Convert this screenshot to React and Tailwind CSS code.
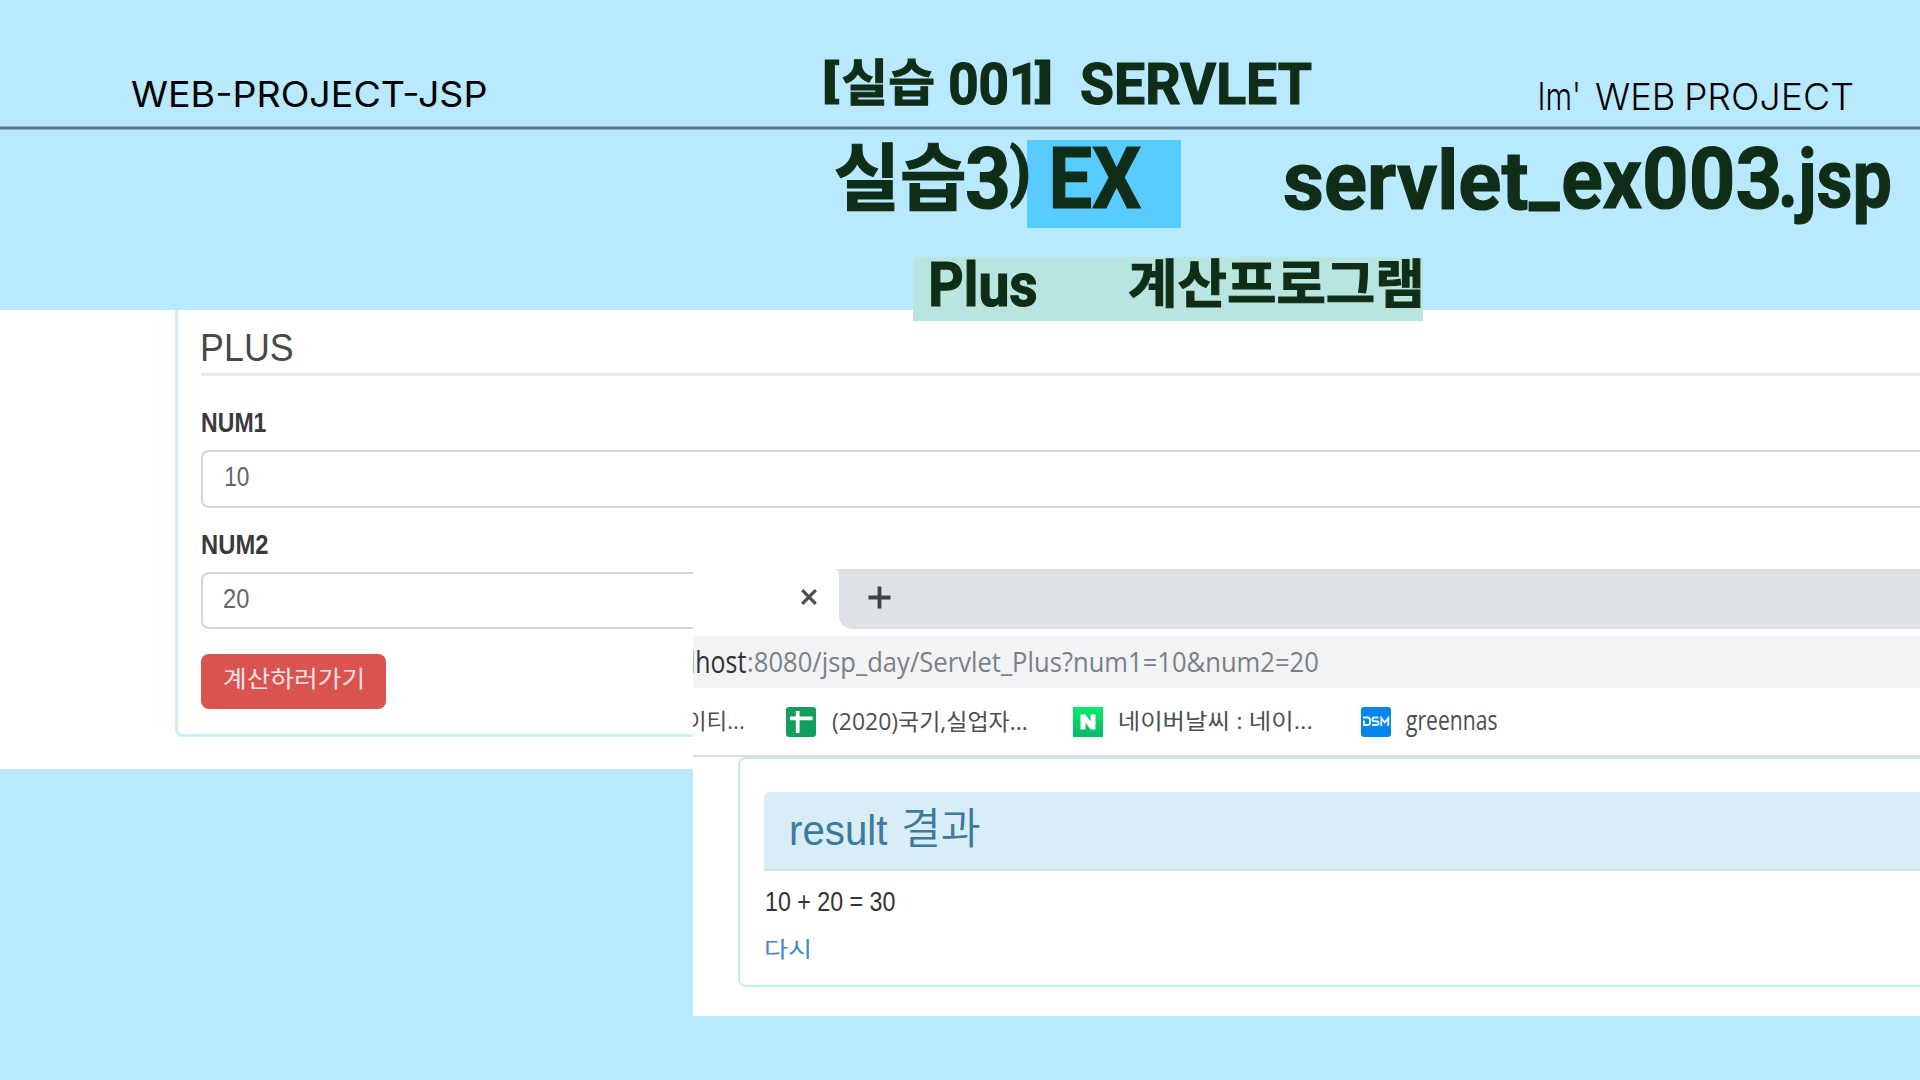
import React, { useLayoutEffect, useRef, useState } from "react";

const TITLE = "font-['Roboto','Noto_Sans_CJK_KR',sans-serif] [-webkit-text-stroke:1.2px_#0f2d17]";
const ARIAL = "font-['Liberation_Sans','Noto_Sans_CJK_KR',sans-serif]";
const INTER = "font-['Inter',sans-serif]";
const SEGOE = "font-['Open_Sans','Noto_Sans_CJK_KR',sans-serif]";

/* Text stretched so that its inked area fills the box given by the width and height classes. */
function Ink({ children, className = "" }) {
  const box = useRef(null);
  const [style, setStyle] = useState({});
  useLayoutEffect(() => {
    const el = box.current;
    const cs = getComputedStyle(el);
    const ctx = document.createElement("canvas").getContext("2d");
    ctx.font = `${cs.fontWeight} ${cs.fontSize} ${cs.fontFamily}`;
    const m = ctx.measureText(children);
    const size = parseFloat(cs.fontSize);
    const baseline = (size + m.fontBoundingBoxAscent - m.fontBoundingBoxDescent) / 2;
    const sx = el.clientWidth / (m.actualBoundingBoxLeft + m.actualBoundingBoxRight);
    const sy = el.clientHeight / (m.actualBoundingBoxAscent + m.actualBoundingBoxDescent);
    setStyle({
      transform: `scale(${sx}, ${sy}) translate(${m.actualBoundingBoxLeft}px, ${m.actualBoundingBoxAscent - baseline}px)`,
    });
  }, [children]);
  return (
    <span ref={box} className={`block shrink-0 ${className}`}>
      <span className="block w-max origin-top-left whitespace-pre leading-none" style={style}>
        {children}
      </span>
    </span>
  );
}

function Header() {
  return (
    <header className="flex h-[126px] items-start">
      <Ink className={`ml-[131px] mt-[81px] h-[26px] w-[355px] text-[35px] text-black ${INTER}`}>WEB-PROJECT-JSP</Ink>
      <div className={`ml-[339px] flex items-start text-[58px] font-bold text-[#0f2d17] ${TITLE}`}>
        <Ink className="mt-[59px] h-[45px] w-[14px]">[</Ink>
        <Ink className="ml-[4px] mt-[59px] h-[47px] w-[90px]">실습</Ink>
        <Ink className="ml-[17px] mt-[62px] h-[43px] w-[80px]">001</Ink>
        <Ink className="ml-[5px] mt-[59px] h-[45px] w-[15px]">]</Ink>
        <Ink className="ml-[31px] mt-[62px] h-[43px] w-[230px]">SERVLET</Ink>
      </div>
      <div className={`ml-[229px] mt-[82px] flex items-start text-[36px] font-light text-black ${INTER}`}>
        <Ink className="h-[28px] w-[38px]">Im'</Ink>
        <Ink className="ml-[18px] mt-px h-[27px] w-[78px]">WEB</Ink>
        <Ink className="ml-[13px] mt-px h-[27px] w-[165px]">PROJECT</Ink>
      </div>
    </header>
  );
}

function Titles() {
  return (
    <section className={`relative z-10 h-[180px] font-bold text-[#0f2d17] ${TITLE}`}>
      <div className="flex h-[127px] items-start pl-[836px] text-[84px]">
        <Ink className="relative z-10 mt-[13px] h-[68px] w-[128px]">실습</Ink>
        <Ink className="relative z-10 ml-[3px] mt-[17px] h-[63px] w-[41px]">3</Ink>
        <Ink className="relative z-10 ml-[2px] mt-[13px] h-[66px] w-[18px]">)</Ink>
        <div className="-ml-px mt-[10px] flex h-[88px] w-[154px] bg-[#58cbff] pl-[26px] pt-[8px]">
          <Ink className="h-[61px] w-[88px]">EX</Ink>
        </div>
        <Ink className="ml-[104px] mt-[18px] h-[62px] w-[242px]">servlet</Ink>
        <Ink className="ml-[2px] mt-[72px] h-[9px] w-[31px]">_</Ink>
        <Ink className="ml-[3px] mt-[33px] h-[47px] w-[79px]">ex</Ink>
        <Ink className="ml-[3px] mt-[17px] h-[63px] w-[134px]">003</Ink>
        <Ink className="ml-[3px] mt-[18px] h-[77px] w-[108px]">.jsp</Ink>
      </div>
      <div className="ml-[913px] flex h-[64px] w-[510px] items-start bg-[#b8e5df] pl-[18px] text-[60px]">
        <Ink className="mt-[5px] h-[46px] w-[105px]">Plus</Ink>
        <Ink className="ml-[93px] mt-[2px] h-[50px] w-[291px]">계산프로그램</Ink>
      </div>
    </section>
  );
}

function Form() {
  return (
    <section className={`h-[459px] bg-white pl-[175px] ${ARIAL}`}>
      <div className="h-[427px] overflow-hidden rounded-bl-lg border-b-[3px] border-l-[3px] border-[#cdeef3] pl-[23px] text-[#3a3a3a]">
        <div className="h-[66px] border-b-[3px] border-[#e9e9e9] pl-[2px] pt-[24px]">
          <Ink className="h-[27px] w-[89px] text-[37px] text-[#484848]">PLUS</Ink>
        </div>
        <Ink className="ml-px mt-[37px] h-[19px] w-[64px] text-[26px] font-bold">NUM1</Ink>
        <div className="mt-[18px] h-[58px] rounded-l-lg border-[2.5px] border-r-0 border-[#d4d4d4] pl-[22px] pt-[15px]">
          <Ink className="h-[19px] w-[24px] text-[26px] text-[#666]">10</Ink>
        </div>
        <Ink className="ml-px mt-[27px] h-[19px] w-[66px] text-[26px] font-bold">NUM2</Ink>
        <div className="mt-[18px] h-[57px] rounded-l-lg border-[2.5px] border-r-0 border-[#d4d4d4] pl-[21px] pt-[15px]">
          <Ink className="h-[19px] w-[25px] text-[26px] text-[#666]">20</Ink>
        </div>
        <button className="mt-[25px] flex h-[55px] w-[185px] rounded-lg bg-[#d9534f] pl-[23px] pt-[13px]">
          <Ink className="h-[23px] w-[138px] text-[25px] text-[#fbe3e6]">계산하러가기</Ink>
        </button>
      </div>
    </section>
  );
}

function TabStrip() {
  return (
    <div className="flex h-[60px]">
      <div className="w-[142px] pl-[108px] pt-[20px]">
        <svg className="size-4" viewBox="0 0 16 16" stroke="#4a4d50" strokeWidth="3.2" fill="none">
          <path d="M1.2 1.2 14.8 14.8M14.8 1.2 1.2 14.8" />
        </svg>
      </div>
      <svg className="h-[60px] w-[18px]" viewBox="0 0 18 60" fill="#dee1e6">
        <path d="M0 0H18V60C9 59.5 4 55 4 45V9C4 5 3 2 0 0Z" />
      </svg>
      <div className="grow bg-[#dee1e6] pl-[15px] pt-[17px]">
        <svg className="size-[23px]" viewBox="0 0 23 23" stroke="#404346" strokeWidth="3.8" fill="none">
          <path d="M11.5 .5V22.5M.5 11.5H22.5" />
        </svg>
      </div>
    </div>
  );
}

function Bookmarks() {
  return (
    <div className="flex h-[67px] items-start pt-[19px] text-[22px] text-[#4c4f54]">
      <Ink className="-ml-[6px] mt-[3px] h-[22px] w-[57px]">이티...</Ink>
      <svg className="ml-[42px] size-[30px]" viewBox="0 0 30 30">
        <rect width="30" height="30" rx="3" fill="#139f5b" />
        <path d="M4 11.3H26.5M11.7 4V26" stroke="#fff" strokeWidth="3.8" />
      </svg>
      <Ink className="ml-[16px] mt-[3px] h-[23px] w-[195px]">(2020)국기,실업자...</Ink>
      <svg className="ml-[46px] size-[30px]" viewBox="0 0 30 30">
        <defs>
          <linearGradient id="naver" x2="0" y2="1">
            <stop stopColor="#04ee6b" />
            <stop offset="1" stopColor="#08b765" />
          </linearGradient>
        </defs>
        <rect width="30" height="30" fill="url(#naver)" />
        <path d="M7.5 7.5H12.5L17.5 14.5V7.5H22.5V22.5H17.5L12.5 15.5V22.5H7.5Z" fill="#fff" />
      </svg>
      <Ink className="ml-[17px] mt-[3px] h-[22px] w-[192px]">네이버날씨 : 네이...</Ink>
      <svg className="ml-[49px] size-[30px]" viewBox="0 0 30 30" fill="none" stroke="#e4f3ff" strokeWidth="1.9">
        <rect width="30" height="30" rx="3" fill="#0785e8" stroke="none" />
        <path d="M2 10.5H6.5Q9 10.5 9 13V15.5Q9 18 6.5 18H3V13.5M17.5 10.5H13.5Q11.5 10.5 11.5 12.5T13.5 14.3H15.5Q17.5 14.3 17.5 16.2T15.5 18H11M20.3 19V11L23.8 15.5 27.3 11V19" />
      </svg>
      <Ink className="ml-[15px] mt-[8px] h-[21px] w-[91px]">greennas</Ink>
    </div>
  );
}

function BrowserWindow() {
  return (
    <section className={`absolute left-[693px] top-[569px] h-[447px] w-[1227px] overflow-hidden bg-white ${SEGOE}`}>
      <TabStrip />
      <div className="mt-[7px] flex h-[52px] items-start bg-[#f1f3f4] pt-[15px] text-[26px]">
        <Ink className="-ml-[2px] h-[22px] w-[55px] text-[#303236]">lhost</Ink>
        <Ink className="ml-[2px] mt-px h-[26px] w-[570px] text-[#7c7f84]">:8080/jsp_day/Servlet_Plus?num1=10&num2=20</Ink>
      </div>
      <Bookmarks />
      <div className="h-[2px] bg-[#dcdfe1]" />
      <div className={`ml-[45px] h-[230px] overflow-hidden rounded-l-lg border-2 border-r-0 border-[#c6ebf1] pl-[24px] pt-[33px] ${ARIAL}`}>
        <div className="flex h-[79px] items-start rounded-tl-md border-b-2 border-[#bfe8f0] bg-[#d9edf6] pl-[27px] pt-[16px] text-[41px] text-[#3d7a9e]">
          <Ink className="mt-[7px] h-[31px] w-[97px]">result</Ink>
          <Ink className="ml-[15px] h-[41px] w-[77px] font-[350]">결과</Ink>
        </div>
        <Ink className="ml-[2px] mt-[21px] h-[19px] w-[129px] text-[26px] text-[#333]">10 + 20 = 30</Ink>
        <Ink className="ml-[2px] mt-[27px] h-[22px] w-[43px] text-[25px] text-[#428bca]">다시</Ink>
      </div>
    </section>
  );
}

export default function App() {
  return (
    <main className="relative h-[1080px] w-[1920px] overflow-hidden bg-[#b8e9ff]">
      <Header />
      <div className="h-[4px] border-y border-[#8aafbf] bg-[#5c7480]" />
      <Titles />
      <Form />
      <BrowserWindow />
    </main>
  );
}
